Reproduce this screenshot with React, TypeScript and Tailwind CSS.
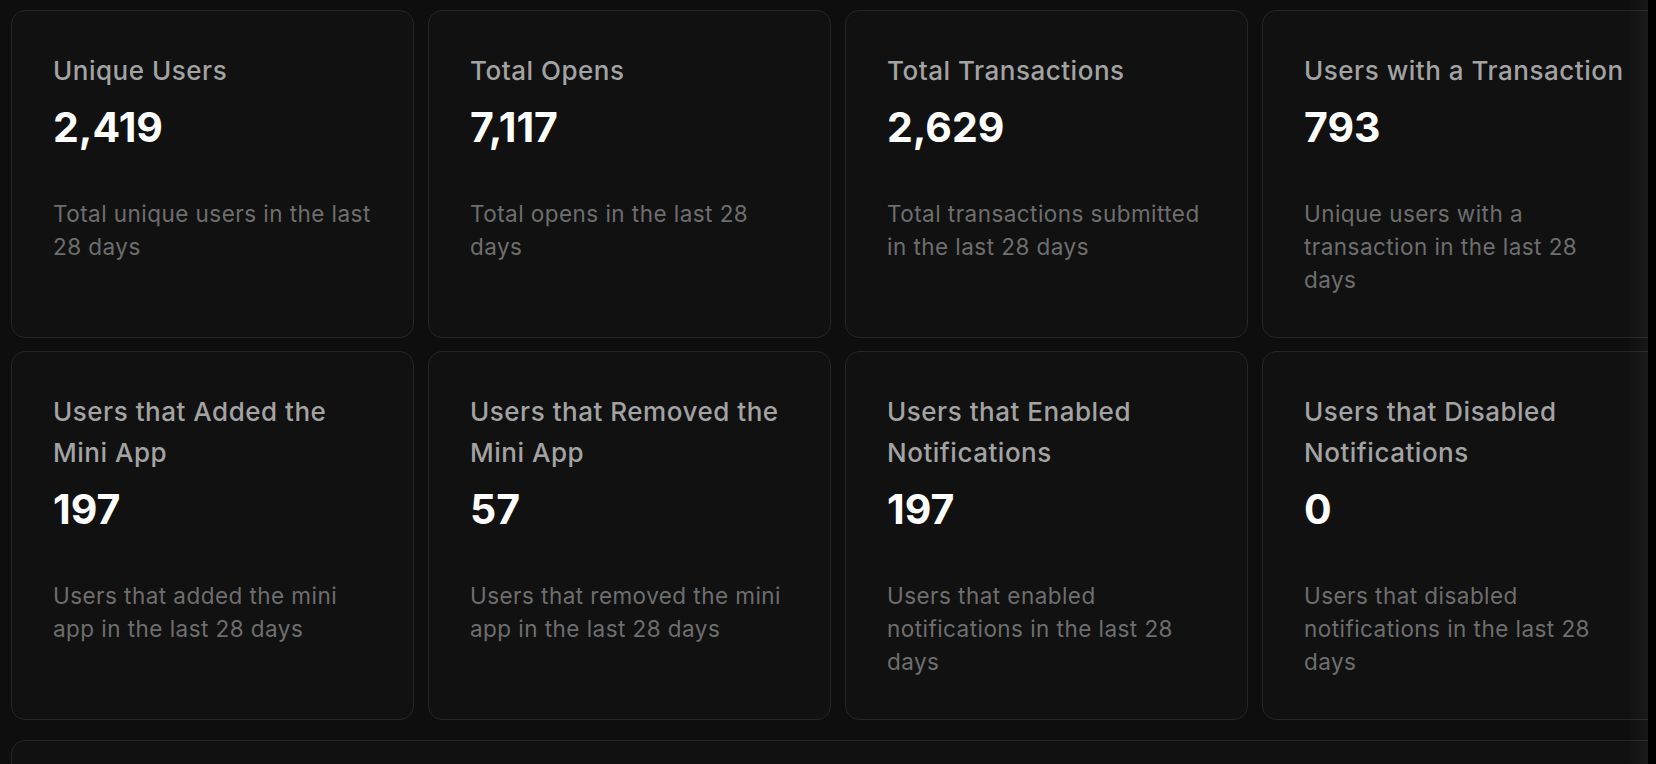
import React from 'react';

type Stat = {
  title: string;
  value: string;
  description: string;
};

const STATS: Stat[] = [
  { title: 'Unique Users', value: '2,419', description: 'Total unique users in the last 28 days' },
  { title: 'Total Opens', value: '7,117', description: 'Total opens in the last 28 days' },
  { title: 'Total Transactions', value: '2,629', description: 'Total transactions submitted in the last 28 days' },
  { title: 'Users with a Transaction', value: '793', description: 'Unique users with a transaction in the last 28 days' },
  { title: 'Users that Added the Mini App', value: '197', description: 'Users that added the mini app in the last 28 days' },
  { title: 'Users that Removed the Mini App', value: '57', description: 'Users that removed the mini app in the last 28 days' },
  { title: 'Users that Enabled Notifications', value: '197', description: 'Users that enabled notifications in the last 28 days' },
  { title: 'Users that Disabled Notifications', value: '0', description: 'Users that disabled notifications in the last 28 days' },
];

const StatCard = ({ stat }: { stat: Stat }) => (
  <div className="rounded-[14px] border border-[#262626] bg-[#111111] pt-[39px] pb-[41px] pl-[41px] pr-[35px]">
    <h3 className="text-[26px] leading-[41px] font-medium tracking-[0.02em] text-[#a3a3a3]">{stat.title}</h3>
    <p className="mt-[12px] text-[41px] leading-[49px] font-bold text-white">{stat.value}</p>
    <p className="mt-[45px] text-[22.5px] leading-[33px] tracking-[0.02em] text-[#6e6e6e]">{stat.description}</p>
  </div>
);

export default function App() {
  return (
    <div
      className="flex h-[764px] w-[1656px] overflow-hidden bg-black"
      style={{ fontFamily: 'Inter, "Noto Sans", sans-serif' }}
    >
      <div className="relative h-full w-[1648px] shrink-0 overflow-hidden bg-[#0e0e0e]">
        <div className="w-[1680px] pl-[11px] pt-[10px]">
          <div className="grid grid-cols-[403px_403px_403px_403px] gap-x-[14px] gap-y-[13px]">
            {STATS.map((stat) => (
              <StatCard key={stat.title} stat={stat} />
            ))}
          </div>
          <div className="mt-[20px] h-[120px] rounded-[14px] border border-[#262626] bg-[#111111]" />
        </div>
        <div className="pointer-events-none absolute inset-y-0 right-0 w-[20px] bg-gradient-to-r from-transparent to-[#ffffff0a]" />
      </div>
    </div>
  );
}
